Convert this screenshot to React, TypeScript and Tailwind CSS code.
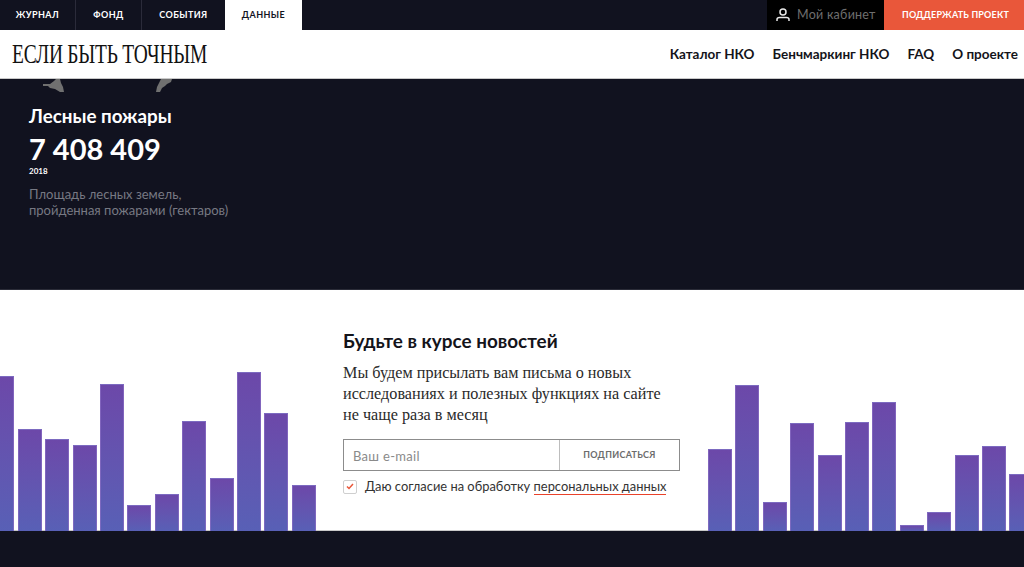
const futura = "font-['Lato','Noto_Sans',sans-serif]";

const leftBars = [155, 102, 92, 86.5, 147, 26, 37, 110, 53, 159, 118, 46];
const rightBars = [82, 146, 29.5, 108, 76, 109, 129, 6, 19, 76, 85, 57];

function Bars({ values, className }: { values: number[]; className: string }) {
  return (
    <div className={`flex items-end gap-[3.4px] overflow-hidden h-[241px] ${className}`}>
      {values.map((h, i) => (
        <div
          key={i}
          className="w-6 shrink-0 bg-gradient-to-b from-[#6c48a9] to-[#5860b6] border-x border-t border-[#8b6fc4]/70"
          style={{ height: h }}
        />
      ))}
    </div>
  );
}

function Tab({ label, active, width, border }: { label: string; active?: boolean; width: string; border?: boolean }) {
  return (
    <div
      className={`flex items-center justify-center h-full text-[9px] font-bold tracking-[0.4px] ${width} ${
        active ? "bg-white text-[#14141f]" : "text-white"
      } ${border ? "border-r border-[#2b2b3a]" : ""}`}
    >
      {label}
    </div>
  );
}

export default function App() {
  return (
    <div className={`w-[1024px] h-[567px] overflow-hidden bg-white ${futura}`}>
      <div className="flex h-[30px] bg-[#11121f]">
        <Tab label="ЖУРНАЛ" width="w-[76px]" border />
        <Tab label="ФОНД" width="w-[66px]" border />
        <Tab label="СОБЫТИЯ" width="w-[83px]" />
        <Tab label="ДАННЫЕ" width="w-[77px]" active />
        <div className="ml-auto flex h-full">
          <div className="flex items-center w-[117px] bg-black pl-[9px] gap-[7px]">
            <svg width="14" height="14" viewBox="0 0 14 14" fill="none" stroke="#e8e8e8" strokeWidth="1.5">
              <circle cx="7" cy="4" r="3" />
              <path d="M1 13v-1.5C1 10 2 9.500 3.500 9.500h7c1.500 0 2.500.5 2.500 2V13" />
            </svg>
            <span className="text-[12.5px] tracking-[0.25px] text-[#6e6e6e]">Мой кабинет</span>
          </div>
          <div className="flex items-center justify-center w-[140px] pl-[3px] bg-[#e9573a] text-white text-[9px] font-bold tracking-[0.2px]">
            ПОДДЕРЖАТЬ ПРОЕКТ
          </div>
        </div>
      </div>

      <div className="flex items-center h-[49px] border-b border-[#c9c9c9] bg-white pl-3 pr-[6px]">
        <div className="font-['Liberation_Serif',serif] text-[27px] text-[#111] origin-left scale-x-[0.72] tracking-[-0.3px] whitespace-nowrap w-[240px]">
          ЕСЛИ БЫТЬ ТОЧНЫМ
        </div>
        <nav className="ml-auto flex gap-[18px] text-[13.5px] font-bold text-[#14141a]">
          <span>Каталог НКО</span>
          <span>Бенчмаркинг НКО</span>
          <span>FAQ</span>
          <span>О проекте</span>
        </nav>
      </div>

      <div className="h-[211px] bg-[#11121f] border-b border-[#2b2c38]">
        <svg width="180" height="14" viewBox="0 0 180 14" className="block">
          <path d="M43 5H50L54 2 56 0H60L61 4 63 8 64 13H60L55 10 50 9 48 7H43Z" fill="#707070" />
          <path d="M161 0H172L171 3 167 5 165 7 162 9 160 13H156L157 8 159 4Z" fill="#707070" />
        </svg>
        <div className="pl-[29px] pt-[11px]">
          <div className="text-[18.8px] leading-[24px] font-bold text-white">Лесные пожары</div>
          <div className="text-[29px] leading-[34px] mt-[4px] font-bold text-white">7 408 409</div>
          <div className="text-[8px] leading-[10px] font-bold text-white">2018</div>
          <div className="text-[13px] leading-[16px] mt-[10px] text-[#777983]">
            Площадь лесных земель,
            <br />
            пройденная пожарами (гектаров)
          </div>
        </div>
      </div>

      <div className="grid grid-cols-[343px_337px_1fr] grid-rows-[240px] h-[241px] border-b border-[#c9c9c9]">
        <Bars values={leftBars} className="-ml-[9.6px]" />
        <div className="pt-[39px]">
          <div className="text-[18.9px] leading-[24px] font-bold text-[#14141a]">Будьте в курсе новостей</div>
          <div className="mt-[10px] font-['Liberation_Serif',serif] text-[16.2px] leading-[21px] text-[#2a2a2a]">
            Мы будем присылать вам письма о новых
            <br />
            исследованиях и полезных функциях на сайте
            <br />
            не чаще раза в месяц
          </div>
          <div className="mt-[13px] flex h-[32px] border border-[#8c8c8c]">
            <div className="flex items-center w-[216px] pl-[9px] pt-[3px] text-[13px] tracking-[0.3px] text-[#8a8a8a] border-r border-[#bdbdbd]">
              Ваш e-mail
            </div>
            <div className="flex-1 flex items-center justify-center text-[9px] font-bold tracking-[0.3px] text-[#6c6c6c]">
              ПОДПИСАТЬСЯ
            </div>
          </div>
          <div className="mt-[6px] flex items-center gap-[8px] text-[12.9px] text-[#333]">
            <div className="flex items-center justify-center w-[14px] h-[14px] border border-[#cfcfcf] rounded-[2px]">
              <svg width="8" height="7" viewBox="0 0 8 7" fill="none" stroke="#e9573a" strokeWidth="1.5">
                <path d="M1 3.500l2 2 4-4.500" />
              </svg>
            </div>
            <span>
              Даю согласие на обработку{" "}
              <span className="border-b-[1.5px] border-[#e9422a]">персональных данных</span>
            </span>
          </div>
        </div>
        <Bars values={rightBars} className="pl-[28px]" />
      </div>

      <div className="h-[36px] bg-[#11121f]" />
    </div>
  );
}
